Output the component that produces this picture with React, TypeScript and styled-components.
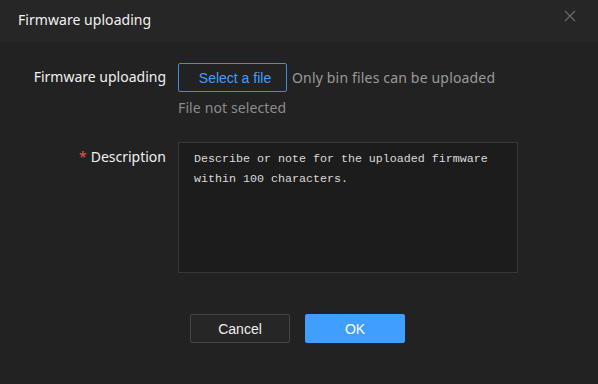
import React from "react";
import styled, { createGlobalStyle } from "styled-components";

const Global = createGlobalStyle`
  html, body { margin: 0; padding: 0; background: #222222; }
  body { font-family: "Noto Sans", "Open Sans", sans-serif; }
  * { box-sizing: border-box; }
`;

const Dialog = styled.div`
  width: 598px;
  height: 384px;
  background: #222222;
  display: flex;
  flex-direction: column;
`;

const Header = styled.div`
  height: 42px;
  background: #262626;
  display: flex;
  align-items: center;
  justify-content: space-between;
  padding: 0 22px 0 18px;
  color: #f2f2f2;
  font-size: 14px;
`;

const Title = styled.span`
  line-height: 20px;
  margin-top: -3px;
  letter-spacing: 0.05px;
`;

const Close = styled.button`
  border: none;
  background: transparent;
  padding: 0;
  width: 12px;
  height: 12px;
  margin-top: -10px;
  display: flex;
  cursor: pointer;
`;

const Form = styled.div`
  display: grid;
  grid-template-columns: 166px 340px;
  column-gap: 12px;
  row-gap: 24px;
  padding-top: 21px;
`;

const Label = styled.label<{ $top: number }>`
  text-align: right;
  color: #f0f0f0;
  font-size: 14px;
  line-height: 20px;
  padding-top: ${(p) => p.$top}px;
  white-space: nowrap;
`;

const Star = styled.span`
  color: #e5534b;
  margin-right: 4px;
`;

const Field = styled.div`
  display: flex;
  flex-direction: column;
`;

const UploadLine = styled.div`
  display: flex;
  align-items: center;
  gap: 5px;
  white-space: nowrap;
`;

const FileButton = styled.button`
  width: 109px;
  height: 29px;
  border: 1px solid #3a8ee6;
  border-radius: 2px;
  background: transparent;
  color: #409eff;
  font-family: "Liberation Sans", Arial, sans-serif;
  font-size: 14px;
  padding: 0 0 0 5px;
  cursor: pointer;
`;

const Hint = styled.span`
  color: #9a9a9a;
  font-size: 14px;
  line-height: 20px;
  letter-spacing: 0.17px;
`;

const Status = styled.div`
  color: #8c8c8c;
  font-size: 14px;
  line-height: 20px;
  margin-top: 6px;
  letter-spacing: 0.12px;
`;

const TextArea = styled.textarea`
  width: 340px;
  height: 131px;
  resize: none;
  background: #1c1c1c;
  border: 1px solid #363636;
  border-radius: 0;
  padding: 6px 15px;
  font-family: "Liberation Mono", "DejaVu Sans Mono", monospace;
  font-size: 11.67px;
  line-height: 20px;
  color: #e0e0e0;
  outline: none;
  &::placeholder { color: #dadada; }
`;

const Footer = styled.div`
  display: flex;
  justify-content: center;
  gap: 15px;
  margin-top: 41px;
  padding-right: 3px;
`;

const Btn = styled.button<{ $primary?: boolean }>`
  width: 100px;
  height: 29px;
  border-radius: 2px;
  border: 1px solid ${(p) => (p.$primary ? "#409eff" : "#454545")};
  background: ${(p) => (p.$primary ? "#409eff" : "#262626")};
  color: ${(p) => (p.$primary ? "#ffffff" : "#eeeeee")};
  font-family: "Liberation Sans", Arial, sans-serif;
  font-size: 14px;
  padding: 0;
  cursor: pointer;
`;

export default function App() {
  return (
    <>
      <Global />
      <Dialog>
        <Header>
          <Title>Firmware uploading</Title>
          <Close aria-label="Close">
            <svg width="12" height="12" viewBox="0 0 12 12">
              <path d="M1 1 L11 11 M11 1 L1 11" stroke="#6a6a6a" strokeWidth="1.2" fill="none" />
            </svg>
          </Close>
        </Header>
        <Form>
          <Label $top={4}>Firmware uploading</Label>
          <Field>
            <UploadLine>
              <FileButton>Select a file</FileButton>
              <Hint>Only bin files can be uploaded</Hint>
            </UploadLine>
            <Status>File not selected</Status>
          </Field>
          <Label $top={5}>
            <Star>*</Star>Description
          </Label>
          <TextArea placeholder={"Describe or note for the uploaded firmware\nwithin 100 characters."} />
        </Form>
        <Footer>
          <Btn>Cancel</Btn>
          <Btn $primary>OK</Btn>
        </Footer>
      </Dialog>
    </>
  );
}
